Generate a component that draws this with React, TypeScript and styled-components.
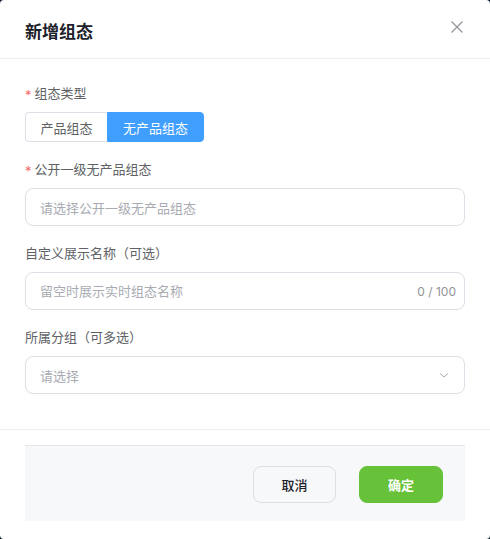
import React, { useState } from 'react'
import styled, { createGlobalStyle } from 'styled-components'

const GlobalStyle = createGlobalStyle`
  html, body {
    margin: 0;
    padding: 0;
    background: #0b1a2b;
  }
  body {
    font-family: Inter, "Noto Sans CJK SC", "Noto Sans", sans-serif;
  }
  * {
    box-sizing: border-box;
  }
`

const Dialog = styled.div`
  width: 490px;
  height: 539px;
  background: #ffffff;
  border-radius: 4px;
  display: flex;
  flex-direction: column;
  overflow: hidden;
`

const Header = styled.div`
  height: 60px;
  padding: 0 25px;
  display: flex;
  align-items: center;
  justify-content: space-between;
  border-bottom: 1px solid #ebeef5;
`

const Title = styled.h2`
  margin: 0;
  padding-top: 2px;
  font-size: 17px;
  font-weight: 700;
  color: #1d2129;
`

const CloseButton = styled.button`
  width: 16px;
  height: 16px;
  margin-right: 0;
  margin-top: -5px;
  padding: 0;
  border: none;
  background: transparent;
  color: #909399;
  display: flex;
  align-items: center;
  justify-content: center;
  cursor: pointer;
`

const Body = styled.div`
  padding: 24px 25px 35px;
  display: flex;
  flex-direction: column;
  gap: 17px;
  border-bottom: 1px solid #ebeef5;
`

const FormItem = styled.div`
  display: flex;
  flex-direction: column;
  gap: 9px;
`

const Label = styled.label`
  height: 20px;
  line-height: 20px;
  font-size: 13px;
  color: #606266;
  display: flex;
  align-items: center;
`

const Required = styled.span`
  color: #f56c6c;
  margin-right: 3px;
  font-size: 13px;
  padding-top: 3px;
`

const Segmented = styled.div`
  display: flex;
`

const SegmentButton = styled.button<{ $active: boolean; $width: number }>`
  width: ${p => p.$width}px;
  height: 30px;
  font-family: inherit;
  font-size: 13px;
  border: 1px solid ${p => (p.$active ? '#409eff' : '#dcdfe6')};
  background: ${p => (p.$active ? '#409eff' : '#ffffff')};
  color: ${p => (p.$active ? '#ffffff' : '#606266')};
  cursor: pointer;
  padding: 0;

  &:first-child {
    border-radius: 4px 0 0 4px;
    border-right: none;
  }
  &:last-child {
    border-radius: 0 4px 4px 0;
  }
`

const Field = styled.div`
  height: 38px;
  border: 1px solid #dcdfe6;
  border-radius: 8px;
  padding: 0 8px 0 14px;
  display: flex;
  align-items: center;
  gap: 8px;
  background: #ffffff;
`

const TextInput = styled.input`
  flex: 1;
  min-width: 0;
  border: none;
  outline: none;
  padding: 0;
  font-family: inherit;
  font-size: 13px;
  color: #303133;
  background: transparent;

  &::placeholder {
    color: #a8abb2;
  }
`

const Placeholder = styled.span`
  flex: 1;
  font-size: 13px;
  color: #a8abb2;
`

const Counter = styled.span`
  font-size: 12px;
  color: #909399;
`

const Chevron = styled.span`
  width: 14px;
  margin-right: 4px;
  display: flex;
  color: #a8abb2;
`

const Footer = styled.div`
  padding: 15px 25px 18px;
`

const FooterBar = styled.div`
  height: 76px;
  background: #f7f8fa;
  border-top: 1px solid #e5e6eb;
  padding: 0 22px;
  display: flex;
  align-items: center;
  justify-content: flex-end;
  gap: 23px;
`

const ActionButton = styled.button<{ $primary?: boolean }>`
  width: ${p => (p.$primary ? 84 : 83)}px;
  height: 37px;
  border-radius: 8px;
  font-family: inherit;
  font-size: 13px;
  font-weight: ${p => (p.$primary ? 700 : 500)};
  border: 1px solid ${p => (p.$primary ? '#67c23a' : '#dcdfe6')};
  background: ${p => (p.$primary ? '#67c23a' : '#f7f8fa')};
  color: ${p => (p.$primary ? '#ffffff' : '#1d2129')};
  cursor: pointer;
  margin-top: 1px;
`

const App: React.FC = () => {
  const [type, setType] = useState<'product' | 'none'>('none')
  const [name, setName] = useState('')

  return (
    <>
      <GlobalStyle />
      <Dialog>
        <Header>
          <Title>新增组态</Title>
          <CloseButton aria-label="关闭">
            <svg width="12" height="12" viewBox="0 0 12 12" fill="none">
              <path d="M0.5 0.5L11.5 11.5M11.5 0.5L0.5 11.5" stroke="currentColor" strokeWidth="1.2" />
            </svg>
          </CloseButton>
        </Header>

        <Body>
          <FormItem>
            <Label>
              <Required>*</Required>组态类型
            </Label>
            <Segmented>
              <SegmentButton
                $width={82}
                $active={type === 'product'}
                onClick={() => setType('product')}
              >
                产品组态
              </SegmentButton>
              <SegmentButton
                $width={97}
                $active={type === 'none'}
                onClick={() => setType('none')}
              >
                无产品组态
              </SegmentButton>
            </Segmented>
          </FormItem>

          <FormItem>
            <Label>
              <Required>*</Required>公开一级无产品组态
            </Label>
            <Field>
              <Placeholder>请选择公开一级无产品组态</Placeholder>
            </Field>
          </FormItem>

          <FormItem>
            <Label>自定义展示名称（可选）</Label>
            <Field>
              <TextInput
                value={name}
                maxLength={100}
                placeholder="留空时展示实时组态名称"
                onChange={e => setName(e.target.value)}
              />
              <Counter>{name.length} / 100</Counter>
            </Field>
          </FormItem>

          <FormItem>
            <Label>所属分组（可多选）</Label>
            <Field>
              <Placeholder>请选择</Placeholder>
              <Chevron>
                <svg width="12" height="12" viewBox="0 0 12 12" fill="none">
                  <path d="M2 4.5L6 8L10 4.5" stroke="currentColor" strokeWidth="1" />
                </svg>
              </Chevron>
            </Field>
          </FormItem>
        </Body>

        <Footer>
          <FooterBar>
            <ActionButton>取消</ActionButton>
            <ActionButton $primary>确定</ActionButton>
          </FooterBar>
        </Footer>
      </Dialog>
    </>
  )
}

export default App
